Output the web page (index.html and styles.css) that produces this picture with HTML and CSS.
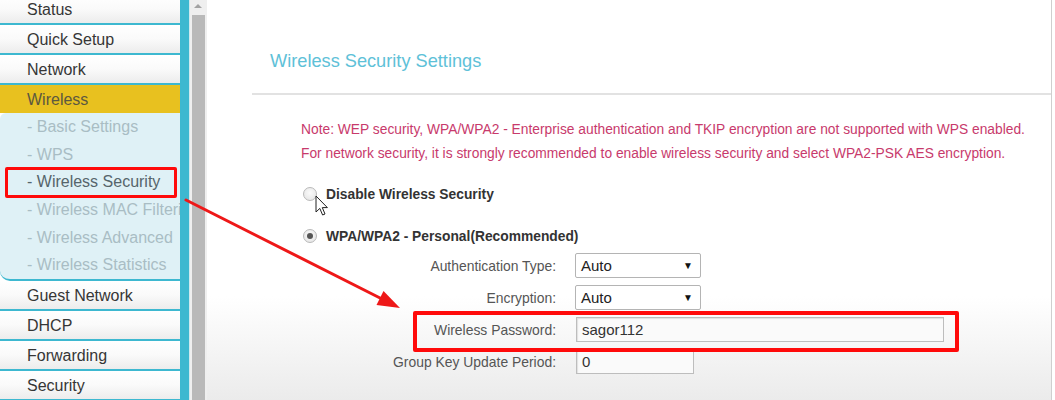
FILE: index.html
```html
<!DOCTYPE html>
<html>
<head>
<meta charset="utf-8">
<link rel="stylesheet" href="styles.css">
</head>
<body>
<div class="page">
  <nav class="sidebar">
    <ul class="menu">
      <li class="item">Status</li>
      <li class="item">Quick Setup</li>
      <li class="item">Network</li>
      <li class="item active">Wireless</li>
      <li class="sub">
        <div class="sub-item">- Basic Settings</div>
        <div class="sub-item">- WPS</div>
        <div class="sub-item current">- Wireless Security</div>
        <div class="sub-item">- Wireless MAC Filtering</div>
        <div class="sub-item">- Wireless Advanced</div>
        <div class="sub-item">- Wireless Statistics</div>
      </li>
      <li class="item">Guest Network</li>
      <li class="item">DHCP</li>
      <li class="item">Forwarding</li>
      <li class="item">Security</li>
    </ul>
  </nav>
  <div class="rail"></div>
  <div class="scrollbar">
    <span class="scroll-up"></span>
    <span class="thumb"></span>
  </div>
  <main class="content">
    <h1 class="title">Wireless Security Settings</h1>
    <div class="rule"></div>
    <div class="body">
      <p class="note">Note: WEP security, WPA/WPA2 - Enterprise authentication and TKIP encryption are not supported with WPS enabled.<br>For network security, it is strongly recommended to enable wireless security and select WPA2-PSK AES encryption.</p>
      <div class="option first">
        <span class="radio"></span>
        <span class="option-label">Disable Wireless Security</span>
      </div>
      <div class="option second">
        <span class="radio checked"></span>
        <span class="option-label">WPA/WPA2 - Personal(Recommended)</span>
      </div>
      <div class="form">
        <label class="label">Authentication Type:</label>
        <div class="select"><span>Auto</span><span class="caret">&#9660;</span></div>
        <label class="label">Encryption:</label>
        <div class="select"><span>Auto</span><span class="caret">&#9660;</span></div>
        <label class="label">Wireless Password:</label>
        <div class="input wide">sagor112</div>
        <label class="label">Group Key Update Period:</label>
        <div class="input short">0</div>
      </div>
    </div>
  </main>
</div>
<div class="annot box-menu"></div>
<div class="annot box-pass"></div>
<svg class="arrow" width="1055" height="400" viewBox="0 0 1055 400">
  <line x1="186" y1="200" x2="384" y2="300" stroke="#ee1818" stroke-width="3" stroke-linecap="round"/>
  <polygon points="400,308 376.5,305 383.5,291" fill="#ee1818"/>
</svg>
<svg class="cursor" width="14" height="22" viewBox="0 0 14 22">
  <path d="M1 1 L1 17 L4.8 13.4 L7.6 20 L10 19 L7.3 12.6 L12.4 12.6 Z" fill="#fff" stroke="#222" stroke-width="1" stroke-linejoin="round"/>
</svg>
</body>
</html>
```
FILE: styles.css
```css
* { box-sizing: border-box; }
html, body { margin: 0; padding: 0; background: #fff; }
body {
  font-family: "Liberation Sans", Arial, sans-serif;
  width: 1055px;
  height: 400px;
  overflow: hidden;
  position: relative;
}
.page {
  display: flex;
  height: 400px;
}
.sidebar {
  width: 180px;
  flex: none;
  background: #fff;
  overflow: hidden;
}
.menu {
  list-style: none;
  margin: -5px 0 0 0;
  padding: 0;
}
.item {
  height: 30px;
  border-bottom: 2px solid #3db8d0;
  padding-left: 27px;
  line-height: 29px;
  font-size: 16px;
  color: #363636;
  background: linear-gradient(to bottom, #ffffff 0%, #fafafa 50%, #ececec 100%);
}
.item.active {
  background: #e8c11f;
  color: #5c5840;
  border-bottom: none;
  height: 28px;
}
.sub {
  background: #dff1f6;
  border-bottom: 2px solid #3db8d0;
  border-bottom-left-radius: 10px;
  border-top-left-radius: 6px;
  padding: 0;
}
.sub-item {
  height: 27.7px;
  line-height: 28px;
  padding-left: 27px;
  font-size: 16px;
  color: #a9bdc4;
  white-space: nowrap;
  overflow: hidden;
}
.sub-item.current { color: #56656b; }
.rail {
  width: 10px;
  flex: none;
  background: #3db8d0;
  border-right: 1px solid #cfe9ef;
}
.scrollbar {
  width: 17px;
  flex: none;
  background: #efefef;
  display: flex;
  flex-direction: column;
  align-items: center;
  padding: 0 2px 0 1px;
}
.scroll-up {
  width: 0;
  height: 0;
  border-left: 4px solid transparent;
  border-right: 4px solid transparent;
  border-bottom: 4px solid #a3a3a3;
  margin: 4px 0 7px;
}
.thumb {
  flex: 1;
  width: 13px;
  background: #b9b9b9;
}
.content {
  width: 845px;
  flex: none;
  border-right: 1px solid #cfcfcf;
  padding-left: 45px;
  background: linear-gradient(to bottom, #ffffff 0%, #ffffff 74%, #ebebeb 100%);
}
.title {
  margin: 49px 0 0 0;
  padding-left: 18px;
  font-size: 18.2px;
  line-height: 24px;
  font-weight: normal;
  color: #5ec1d8;
}
.rule {
  height: 2px;
  background: #e2e2e2;
  margin-top: 20px;
}
.body {
  padding-left: 49px;
}
.note {
  margin: 23px 0 0 0;
  font-size: 13.8px;
  line-height: 24px;
  color: #c83a6c;
  white-space: nowrap;
}
.option {
  display: flex;
  align-items: center;
  height: 20px;
}
.option.first { margin-top: 18px; padding-left: 2px; }
.option.second { margin-top: 22px; padding-left: 2px; }
.radio {
  width: 14px;
  height: 14px;
  border-radius: 50%;
  border: 1px solid #b9b9b9;
  background: radial-gradient(circle at 50% 40%, #fafafa 0%, #e2e2e2 100%);
  margin-right: 9px;
  display: flex;
  align-items: center;
  justify-content: center;
}
.radio.checked::after {
  content: "";
  width: 6px;
  height: 6px;
  border-radius: 50%;
  background: #555;
}
.option-label {
  font-size: 13.8px;
  font-weight: bold;
  color: #333;
}
.form {
  display: grid;
  grid-template-columns: 255px auto;
  column-gap: 19px;
  row-gap: 7px;
  margin-top: 7px;
  justify-items: start;
  align-items: center;
}
.label {
  justify-self: end;
  font-size: 13.9px;
  color: #555;
}
.select {
  width: 126px;
  height: 25px;
  border: 1px solid #b4b4b4;
  border-radius: 2px;
  background: #fff;
  display: flex;
  align-items: center;
  justify-content: space-between;
  padding: 0 7px 0 5px;
  font-size: 15px;
  color: #222;
}
.caret { font-size: 10px; color: #111; }
.input {
  height: 25px;
  border: 1px solid #bdbdbd;
  background: #fafafa;
  box-shadow: inset 1px 1px 1px #e0e0e0;
  padding: 0 5px;
  font-size: 15px;
  line-height: 23px;
  color: #333;
}
.input.wide { width: 368px; margin-left: 1px; }
.input.short { width: 118px; margin-left: 1px; }
.annot {
  position: absolute;
  border: 3px solid #ff0a0a;
  border-radius: 2px;
}
.box-menu {
  left: 5px;
  top: 167px;
  width: 172px;
  height: 31px;
}
.box-pass {
  left: 413px;
  top: 311px;
  width: 546px;
  height: 41px;
  border-width: 4px;
}
.arrow {
  position: absolute;
  left: 0;
  top: 0;
  pointer-events: none;
}
.cursor {
  position: absolute;
  left: 315px;
  top: 195px;
}
```
